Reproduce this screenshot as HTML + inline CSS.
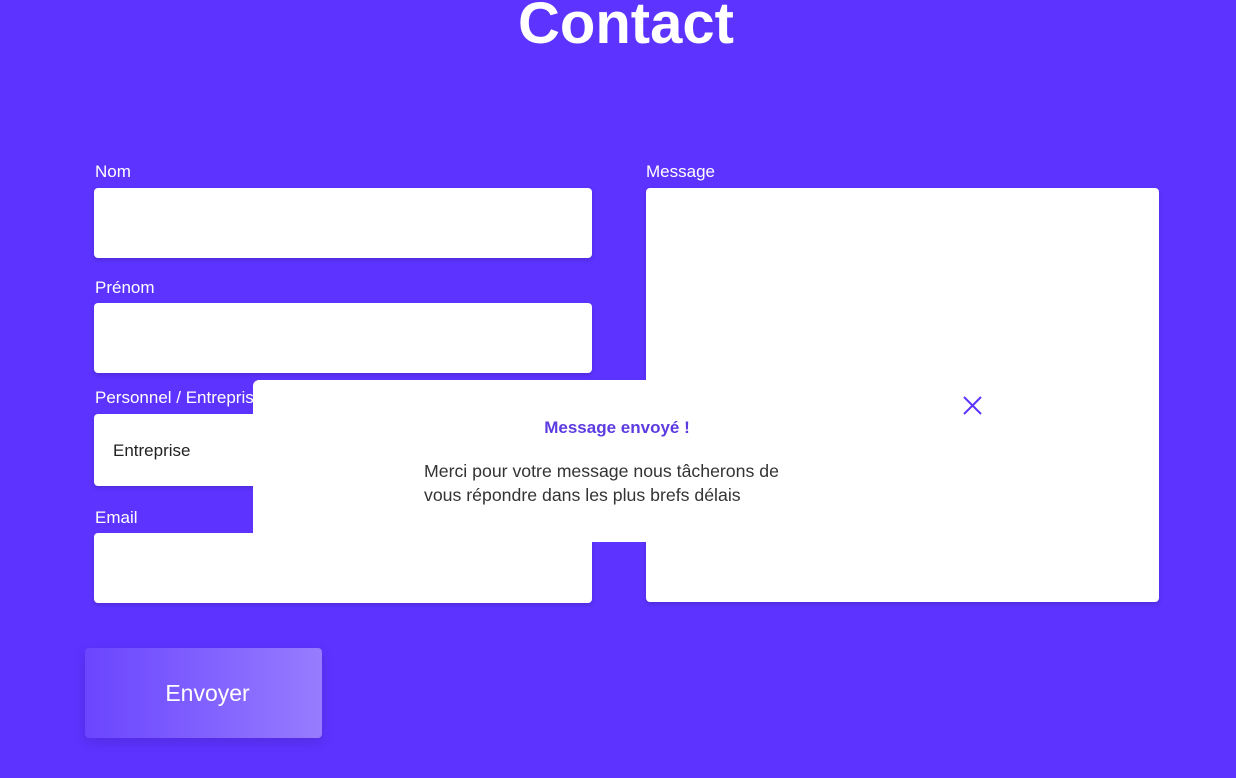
<!DOCTYPE html>
<html><head><meta charset="utf-8"><style>
body{margin:0;width:1236px;height:778px;background:#5c33ff;font-family:"Liberation Sans",sans-serif;position:relative;overflow:hidden;color:#fff}
.a{position:absolute}
h1{position:absolute;margin:0;left:0;width:1252px;text-align:center;top:-9px;font-size:58px;font-weight:bold;line-height:66px}
.l{position:absolute;font-size:17px;color:#fff}
.in{position:absolute;background:#fff;border-radius:4px;box-shadow:0 2px 4px rgba(0,0,0,.15)}
</style></head><body>
<h1>Contact</h1>
<div class="l" style="left:95px;top:162px">Nom</div>
<div class="in" style="left:94px;top:188px;width:498px;height:70px"></div>
<div class="l" style="left:95px;top:388px">Personnel / Entreprise</div>
<div class="l" style="left:95px;top:278px">Prénom</div>
<div class="in" style="left:94px;top:303px;width:498px;height:70px"></div>
<div class="in" style="left:94px;top:414px;width:498px;height:72px"><span style="position:absolute;left:19px;top:27px;color:#222;font-size:17px">Entreprise</span></div>
<div class="l" style="left:95px;top:508px">Email</div>
<div class="in" style="left:94px;top:533px;width:498px;height:70px"></div>
<div class="l" style="left:646px;top:162px">Message</div>
<div class="in" style="left:646px;top:188px;width:513px;height:414px"></div>
<div class="a" style="left:253px;top:380px;width:740px;height:162px;background:#fff;border-radius:6px 0 0 0"></div>
<svg class="a" style="left:962px;top:395px" width="21" height="21"><path d="M2 2L19 19M19 2L2 19" stroke="#5c33ff" stroke-width="2"/></svg>
<div class="a" style="left:253px;top:418px;width:740px;text-align:center;color:#5c3be0;font-size:17px;font-weight:bold;transform:translateX(-6px)">Message envoyé !</div>
<div class="a" style="left:424px;top:459px;color:#333;font-size:17.7px;line-height:24px;white-space:nowrap">Merci pour votre message nous tâcherons de<br>vous répondre dans les plus brefs délais</div>
<div class="a" style="left:85px;top:648px;width:237px;height:90px;border-radius:4px;background:linear-gradient(90deg,#6a45ff,#977cff);box-shadow:0 4px 12px rgba(0,0,0,.12);text-align:center;line-height:90px;font-size:23px;text-indent:8px">Envoyer</div>
</body></html>
